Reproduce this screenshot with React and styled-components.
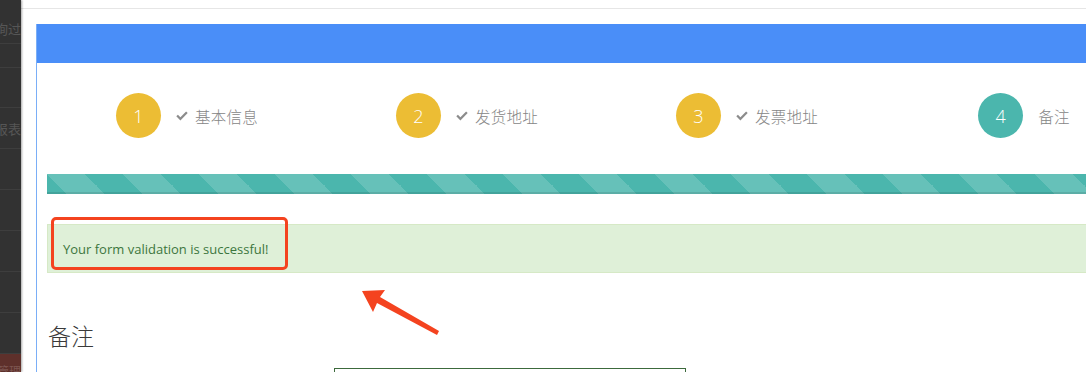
import styled, { createGlobalStyle } from "styled-components";

const GlobalStyle = createGlobalStyle`
  html, body {
    margin: 0;
    padding: 0;
    height: 372px;
    overflow: hidden;
    background: #fff;
    font-family: "Open Sans", "Noto Sans CJK SC", sans-serif;
  }
`;

const Page = styled.div`
  display: flex;
  width: 1086px;
  height: 372px;
  overflow: hidden;
  position: relative;
`;

const Sidebar = styled.div`
  width: 21px;
  flex-shrink: 0;
  background: #323232;
  display: flex;
  flex-direction: column;
  box-shadow: 1px 0 2px rgba(0, 0, 0, 0.35);
  z-index: 1;
  overflow: hidden;
`;

const MenuItem = styled.div`
  height: ${(p) => p.h}px;
  flex-shrink: 0;
  border-bottom: 1px solid #3e3e3e;
  box-sizing: border-box;
  display: flex;
  align-items: ${(p) => (p.bottom ? "flex-end" : "center")};
  justify-content: flex-end;
  padding-bottom: ${(p) => (p.bottom ? 5 : 0)}px;
  font-size: 13px;
  color: #565656;
  white-space: nowrap;
  font-family: "Noto Sans CJK SC", sans-serif;
`;

const MenuActive = styled.div`
  flex: 1;
  background: #5e302b;
  display: flex;
  align-items: flex-start;
  justify-content: flex-end;
  padding-top: 8px;
  font-size: 12px;
  color: #7c5550;
  white-space: nowrap;
  font-family: "Noto Sans CJK SC", sans-serif;
`;

const Main = styled.div`
  flex: 1;
  display: flex;
  flex-direction: column;
  overflow: hidden;
`;

const TopBar = styled.div`
  height: 8px;
  flex-shrink: 0;
  border-bottom: 1px solid #e6e6e6;
`;

const Content = styled.div`
  padding: 15px 0 0 15px;
`;

const Panel = styled.div`
  width: 1120px;
  border-left: 1px solid #7aaef7;
`;

const PanelHeader = styled.div`
  height: 39px;
  background: #4a8ef8;
`;

const PanelBody = styled.div`
  padding: 0 0 0 10px;
`;

const Steps = styled.div`
  display: grid;
  grid-template-columns: repeat(3, 280px) 274px;
  padding-top: 30px;
`;

const Step = styled.div`
  display: flex;
  align-items: center;
  justify-content: center;
`;

const Circle = styled.div`
  width: 45px;
  height: 45px;
  border-radius: 50%;
  background: ${(p) => (p.active ? "#4bb6ad" : "#ecbd34")};
  color: #fff;
  font-size: 18px;
  font-weight: 300;
  display: flex;
  align-items: center;
  justify-content: center;
  margin-right: 15px;
`;

const Check = styled.svg`
  width: 12px;
  height: 10px;
  margin-right: 7px;
  fill: #8c8c8c;
`;

const StepLabel = styled.span`
  font-family: "Noto Sans CJK SC", sans-serif;
  font-size: 15.5px;
  font-weight: 300;
  color: #858585;
  letter-spacing: 0.3px;
`;

const Progress = styled.div`
  margin-top: 36px;
  height: 20px;
  background-color: #4bb6ad;
  background-image: linear-gradient(
    45deg,
    rgba(255, 255, 255, 0.15) 25%,
    transparent 25%,
    transparent 50%,
    rgba(255, 255, 255, 0.15) 50%,
    rgba(255, 255, 255, 0.15) 75%,
    transparent 75%,
    transparent
  );
  background-size: 76px 76px;
  box-shadow: inset 0 -2px 0 rgba(0, 0, 0, 0.1);
`;

const Alert = styled.div`
  margin-top: 30px;
  height: 49px;
  box-sizing: border-box;
  background: #dff0d8;
  border: 1px solid #d6e9c6;
  color: #3c763d;
  font-size: 13px;
  display: flex;
  align-items: center;
  padding: 0 15px;
`;

const SectionTitle = styled.h3`
  margin: 47px 0 0 1px;
  font-family: "Noto Sans CJK SC", sans-serif;
  font-size: 23px;
  font-weight: 300;
  color: #3a3a3a;
  line-height: 30px;
`;

const FormRow = styled.div`
  display: flex;
  margin-top: 18px;
  padding-left: 287px;
`;

const Input = styled.div`
  width: 350px;
  height: 34px;
  border: 1px solid #3c6a3c;
`;

const Annotation = styled.div`
  position: absolute;
  left: 51px;
  top: 217px;
  width: 237px;
  height: 53px;
  box-sizing: border-box;
  border: 3px solid #f4431f;
  border-radius: 5px;
`;

const Arrow = styled.svg`
  position: absolute;
  left: 355px;
  top: 283px;
  width: 90px;
  height: 60px;
`;

const steps = [
  { n: 1, label: "基本信息", done: true },
  { n: 2, label: "发货地址", done: true },
  { n: 3, label: "发票地址", done: true },
  { n: 4, label: "备注", done: false },
];

const menu = [
  { h: 44, text: "询过", bottom: true },
  { h: 24 },
  { h: 40 },
  { h: 41, text: "报表" },
  { h: 41 },
  { h: 41 },
  { h: 41 },
  { h: 41 },
  { h: 41 },
];

export default function App() {
  return (
    <>
      <GlobalStyle />
      <Page>
        <Sidebar>
          {menu.map((m, i) => (
            <MenuItem key={i} h={m.h} bottom={m.bottom}>
              {m.text}
            </MenuItem>
          ))}
          <MenuActive>管理</MenuActive>
        </Sidebar>
        <Main>
          <TopBar />
          <Content>
            <Panel>
              <PanelHeader />
              <PanelBody>
                <Steps>
                  {steps.map((s) => (
                    <Step key={s.n}>
                      <Circle active={!s.done}>{s.n}</Circle>
                      {s.done && (
                        <Check viewBox="0 0 12 10">
                          <path d="M0.3 5.3 L1.9 3.7 L4.4 6.2 L10.1 0.5 L11.7 2.1 L4.4 9.4 Z" />
                        </Check>
                      )}
                      <StepLabel>{s.label}</StepLabel>
                    </Step>
                  ))}
                </Steps>
                <Progress />
                <Alert>Your form validation is successful!</Alert>
                <SectionTitle>备注</SectionTitle>
                <FormRow>
                  <Input />
                </FormRow>
              </PanelBody>
            </Panel>
          </Content>
        </Main>
        <Annotation />
        <Arrow viewBox="0 0 90 60">
          <polygon
            points="7,8 30,7 25,14 84,48 82,52 22,20 18,29"
            fill="#f4431f"
            strokeLinejoin="round"
          />
        </Arrow>
      </Page>
    </>
  );
}
